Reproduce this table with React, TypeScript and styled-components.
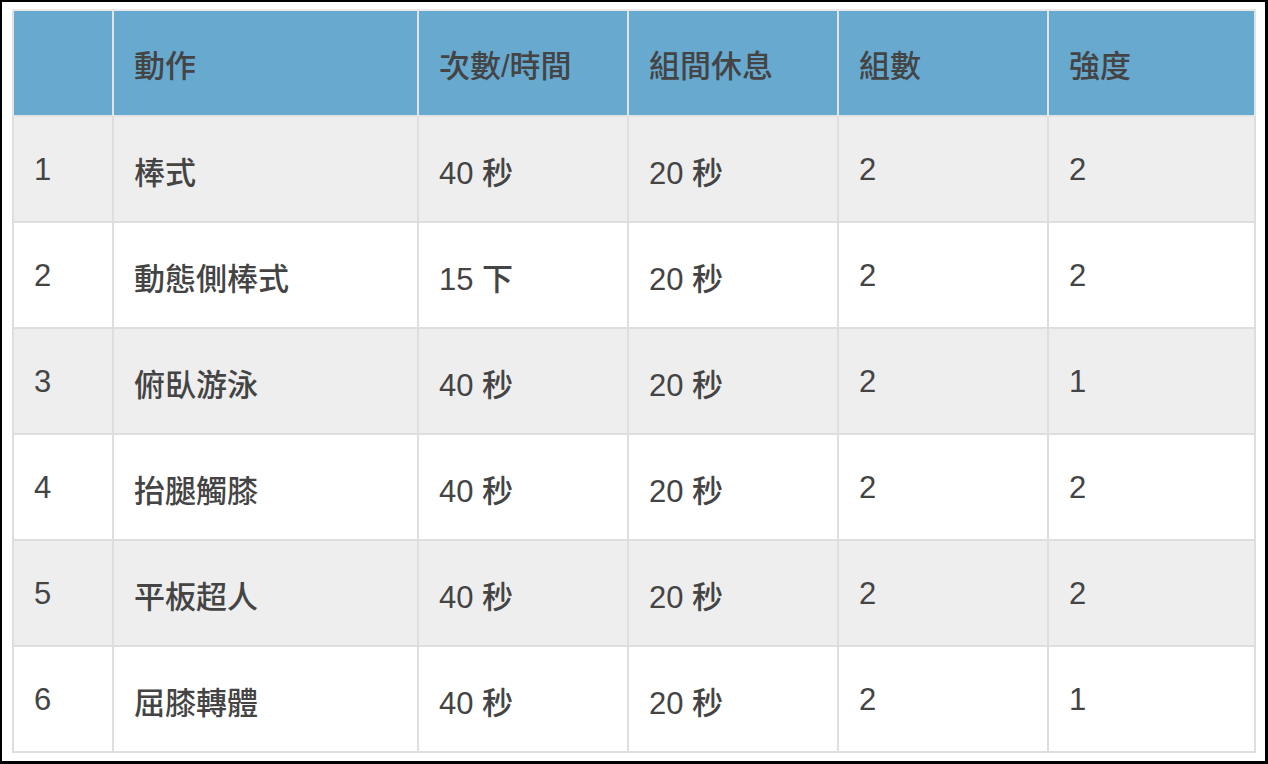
import { createGlobalStyle } from "styled-components";
import styled from "styled-components";

const GlobalStyle = createGlobalStyle`
  html, body {
    margin: 0;
    padding: 0;
    background: #ffffff;
  }
  * {
    box-sizing: border-box;
  }
`;

const Frame = styled.div`
  width: 1268px;
  height: 764px;
  border: 2px solid #000;
  border-bottom-width: 3px;
  border-right-width: 3px;
  padding: 7px 0 0 10px;
  background: #fff;
`;

const Table = styled.table`
  width: 1244px;
  border-collapse: collapse;
  table-layout: fixed;
  font-family: "Liberation Sans", "Noto Sans CJK TC", sans-serif;
  font-size: 31px;
  font-weight: 500;
  color: #444;
`;

const HeadCell = styled.th<{ $w: number }>`
  width: ${p => p.$w}px;
  height: 106px;
  background: #68a9cf;
  border: 2px solid #e3e3e3;
  border-top-color: #e9e9e9;
  padding: 0 20px 0;
  text-align: left;
  font-weight: 500;
  color: #444;
`;

const Row = styled.tr<{ $odd: boolean }>`
  background: ${p => (p.$odd ? "#eeeeee" : "#ffffff")};
`;

const Cell = styled.td`
  height: 106px;
  border: 2px solid #dedede;
  padding: 2px 20px 0;
  text-align: left;
`;

const columns = [
  { label: "", w: 100 },
  { label: "動作", w: 305 },
  { label: "次數/時間", w: 210 },
  { label: "組間休息", w: 210 },
  { label: "組數", w: 210 },
  { label: "強度", w: 207 },
];

const rows = [
  ["1", "棒式", "40 秒", "20 秒", "2", "2"],
  ["2", "動態側棒式", "15 下", "20 秒", "2", "2"],
  ["3", "俯臥游泳", "40 秒", "20 秒", "2", "1"],
  ["4", "抬腿觸膝", "40 秒", "20 秒", "2", "2"],
  ["5", "平板超人", "40 秒", "20 秒", "2", "2"],
  ["6", "屈膝轉體", "40 秒", "20 秒", "2", "1"],
];

export default function App() {
  return (
    <>
      <GlobalStyle />
      <Frame>
        <Table>
          <thead>
            <tr>
              {columns.map((c, i) => (
                <HeadCell key={i} $w={c.w}>
                  {c.label}
                </HeadCell>
              ))}
            </tr>
          </thead>
          <tbody>
            {rows.map((r, i) => (
              <Row key={i} $odd={i % 2 === 0}>
                {r.map((v, j) => (
                  <Cell key={j}>{v}</Cell>
                ))}
              </Row>
            ))}
          </tbody>
        </Table>
      </Frame>
    </>
  );
}
